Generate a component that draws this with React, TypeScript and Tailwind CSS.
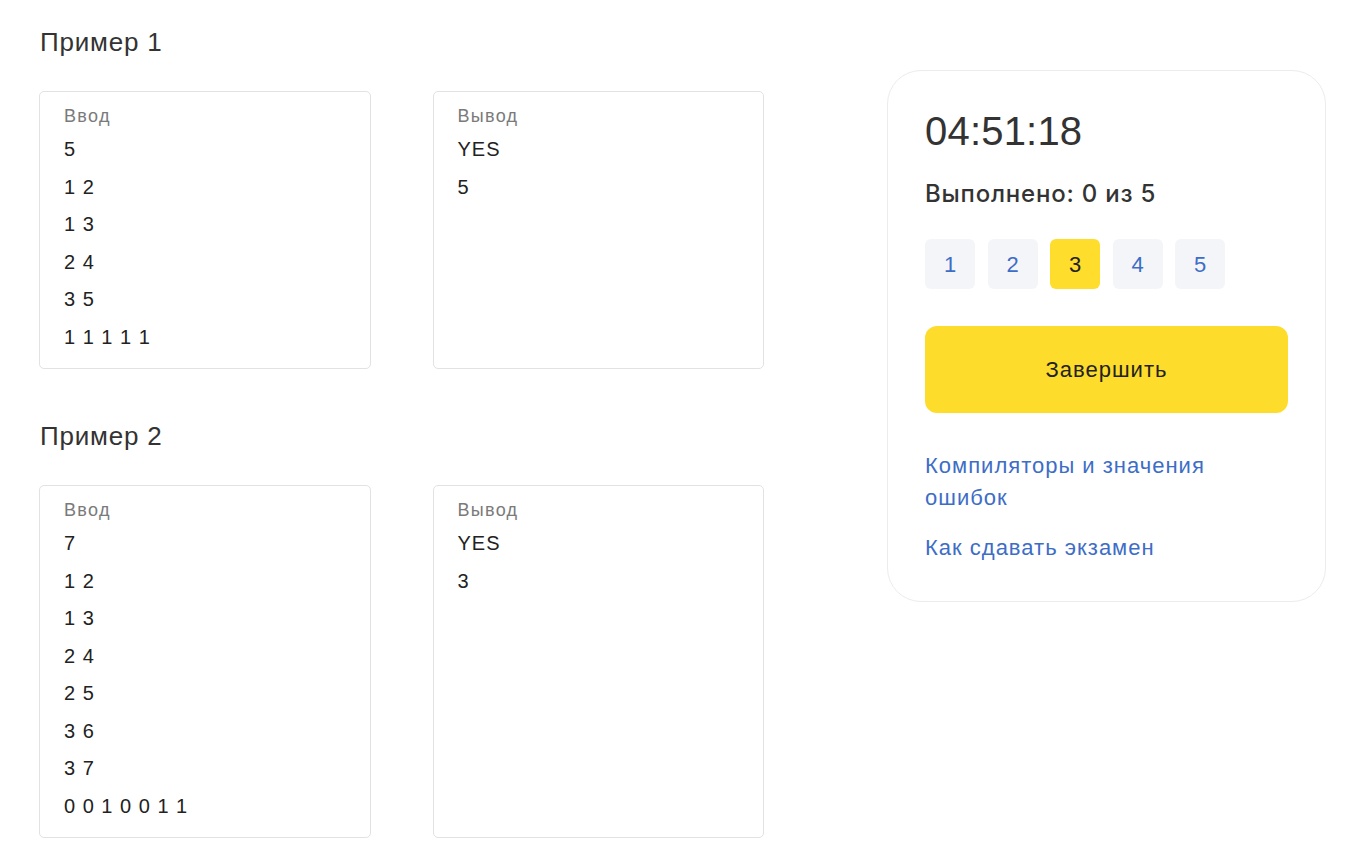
const examples = [
  { title: "Пример 1", input: ["5", "1 2", "1 3", "2 4", "3 5", "1 1 1 1 1"], output: ["YES", "5"] },
  { title: "Пример 2", input: ["7", "1 2", "1 3", "2 4", "2 5", "3 6", "3 7", "0 0 1 0 0 1 1"], output: ["YES", "3"] },
];

const SampleBox = ({ label, lines }: { label: string; lines: string[] }) => (
  <div className="rounded-[5px] border border-[#e2e2e2] bg-white px-[24px] pt-[12px] pb-[12px]">
    <div className="mb-[3px] text-[18px] leading-[24px] tracking-[1.3px] text-[#7a7a7a]">{label}</div>
    {lines.map((line, i) => (
      <div key={i} className="text-[20px] leading-[37.5px] tracking-[1px] text-[#222]">
        {line}
      </div>
    ))}
  </div>
);

const App = () => {
  const tasks = [1, 2, 3, 4, 5];
  return (
    <div
      className="flex min-h-screen bg-white pl-[39px] pt-[26px] text-[#333]"
      style={{ fontFamily: '"Liberation Sans", Arial, sans-serif' }}
    >
      <div className="w-[725px]">
        {examples.map((ex, idx) => (
          <section key={ex.title} className={idx > 0 ? "mt-[51px]" : ""}>
            <h2 className="mb-[33px] pl-[1px] text-[26px] leading-[32px] tracking-[0.8px] text-[#333]">{ex.title}</h2>
            <div className="grid grid-cols-2 gap-[62px]">
              <SampleBox label="Ввод" lines={ex.input} />
              <SampleBox label="Вывод" lines={ex.output} />
            </div>
          </section>
        ))}
      </div>

      <aside className="ml-[123px] mt-[44px] h-fit w-[439px] rounded-[34px] border border-[#ececec] bg-white px-[37px] pt-[37px] pb-[37px]">
        <div className="text-[40px] leading-[46px] tracking-[0.2px] text-[#333]">04:51:18</div>
        <div className="mt-[24px] font-['Inter',sans-serif] text-[24px] font-medium leading-[32px] tracking-[0.8px] text-[#333]">
          Выполнено: 0 из 5
        </div>
        <div className="mt-[29px] flex gap-[12.5px]">
          {tasks.map((n) => (
            <div
              key={n}
              className={
                n === 3
                  ? "flex h-[50px] w-[50px] items-center justify-center rounded-[6px] bg-[#fedd2c] text-[22px] text-[#222]"
                  : "flex h-[50px] w-[50px] items-center justify-center rounded-[6px] bg-[#f4f5f8] text-[22px] text-[#3d6dc6]"
              }
            >
              {n}
            </div>
          ))}
        </div>
        <button className="mt-[37px] flex h-[87px] w-full items-center justify-center rounded-[12px] bg-[#fedc2b] text-[22px] tracking-[1px] text-[#222]">
          Завершить
        </button>
        <div className="mt-[37px] flex flex-col gap-[18px] text-[22px] leading-[32px] tracking-[1px] text-[#3d6dc6]">
          <a href="#" className="w-[300px]">Компиляторы и значения ошибок</a>
          <a href="#">Как сдавать экзамен</a>
        </div>
      </aside>
    </div>
  );
};

export default App;
